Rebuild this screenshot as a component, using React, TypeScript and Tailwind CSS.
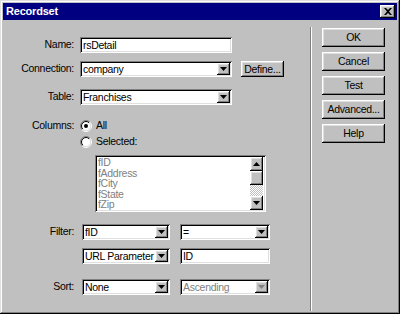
import React from 'react';

const raised =
  'shadow-[inset_-1px_-1px_#000,inset_1px_1px_#fff,inset_-2px_-2px_#808080,inset_2px_2px_#dfdfdf]';
const sunken =
  'shadow-[inset_1px_1px_#808080,inset_-1px_-1px_#fff,inset_2px_2px_#000,inset_-2px_-2px_#dfdfdf]';

function Arrow({ up = false, grey = false }: { up?: boolean; grey?: boolean }) {
  return (
    <svg width="7" height="4" viewBox="0 0 7 4" className={up ? 'rotate-180' : ''}>
      <path d="M0 0h7L3.5 4z" fill={grey ? '#808080' : '#000'} />
    </svg>
  );
}

function ArrowBtn({ up = false, grey = false, h = 'h-full' }: { up?: boolean; grey?: boolean; h?: string }) {
  return (
    <div className={`flex w-[13px] ${h} shrink-0 items-center justify-center bg-[#c0c0c0] ${raised}`}>
      <Arrow up={up} grey={grey} />
    </div>
  );
}

function Select({ value, w, disabled = false }: { value: string; w: string; disabled?: boolean }) {
  return (
    <div className={`flex h-[16px] ${w} bg-white p-[2px] ${sunken}`}>
      <span className={`flex-1 overflow-hidden whitespace-nowrap pl-[1px] leading-[12px] ${disabled ? 'text-[#808080]' : 'text-black'}`}>
        {value}
      </span>
      <ArrowBtn grey={disabled} />
    </div>
  );
}

function TextBox({ value, w }: { value: string; w: string }) {
  return (
    <div className={`flex h-[16px] ${w} items-center bg-white px-[3px] ${sunken}`}>
      <span className="leading-[12px]">{value}</span>
    </div>
  );
}

function Radio({ checked, id }: { checked?: boolean; id: string }) {
  return (
    <svg width="12" height="12" viewBox="0 0 12 12" className="shrink-0">
      <defs>
        <linearGradient id={`o${id}`} x1="0" y1="0" x2="1" y2="1">
          <stop offset="0.5" stopColor="#808080" />
          <stop offset="0.5" stopColor="#ffffff" />
        </linearGradient>
        <linearGradient id={`i${id}`} x1="0" y1="0" x2="1" y2="1">
          <stop offset="0.5" stopColor="#000000" />
          <stop offset="0.5" stopColor="#dfdfdf" />
        </linearGradient>
      </defs>
      <circle cx="6" cy="6" r="5.5" fill="none" stroke={`url(#o${id})`} strokeWidth="1" />
      <circle cx="6" cy="6" r="4.5" fill="#fff" stroke={`url(#i${id})`} strokeWidth="1" />
      {checked && <circle cx="6" cy="6" r="2" fill="#000" />}
    </svg>
  );
}

function Button({ children, w = 'w-[63px]', h = 'h-[19px]' }: { children: React.ReactNode; w?: string; h?: string }) {
  return (
    <div className={`flex ${w} ${h} items-center justify-center bg-[#c0c0c0] ${raised}`}>
      <span className="leading-none">{children}</span>
    </div>
  );
}

function Label({ children }: { children: React.ReactNode }) {
  return <div className="w-[72px] shrink-0 pr-[1px] text-right">{children}</div>;
}

export default function App() {
  const columns = ['fID', 'fAddress', 'fCity', 'fState', 'fZip'];

  return (
    <div
      className="h-[314px] w-[400px] bg-[#c0c0c0] p-[3px] text-[10.5px] tracking-[-0.3px] text-black shadow-[inset_-1px_-1px_#000,inset_1px_1px_#dfdfdf,inset_-2px_-2px_#808080,inset_2px_2px_#fff]"
      style={{ fontFamily: '"Liberation Sans", Arial, sans-serif' }}
    >
      {/* title bar */}
      <div className="flex h-[17px] items-center justify-between bg-[#000080] pl-[3px] pr-[2px]">
        <span className="text-[11px] font-bold tracking-[-0.2px] text-white">Recordset</span>
        <div className={`flex h-[13px] w-[15px] items-center justify-center bg-[#c0c0c0] ${raised}`}>
          <svg width="8" height="7" viewBox="0 0 8 7">
            <path d="M0 0h2l2 2 2-2h2L5 3.5 8 7H6L4 5 2 7H0l3-3.5z" fill="#000" />
          </svg>
        </div>
      </div>

      <div className="flex">
        {/* form */}
        <div className="flex w-[307px] flex-col">
          <div className="mt-[17px] flex h-[16px] items-center gap-[5px]">
            <Label>Name:</Label>
            <TextBox value="rsDetail" w="w-[152px]" />
          </div>

          <div className="mt-[8px] flex h-[16px] items-center gap-[5px]">
            <Label>Connection:</Label>
            <Select value="company" w="w-[152px]" />
            <div className="ml-[4px]">
              <Button w="w-[43px]" h="h-[16px]">Define...</Button>
            </div>
          </div>

          <div className="mt-[12px] flex h-[16px] items-center gap-[5px]">
            <Label>Table:</Label>
            <Select value="Franchises" w="w-[152px]" />
          </div>

          <div className="mt-[14px] flex h-[14px] items-center gap-[5px]">
            <Label>Columns:</Label>
            <Radio checked id="all" />
            <span className="ml-[-1px]">All</span>
          </div>
          <div className="mt-[2px] flex h-[14px] items-center gap-[5px]">
            <div className="w-[72px] shrink-0" />
            <Radio id="sel" />
            <span className="ml-[-1px]">Selected:</span>
          </div>

          <div className="ml-[92px] mt-[6px] flex h-[57px] w-[171px] bg-white p-[2px] shadow-[inset_1px_1px_#808080,inset_-1px_-1px_#fff,inset_2px_2px_#000,inset_-2px_-2px_#dfdfdf]">
            <div className="flex-1 pl-[1px]">
              {columns.map((c) => (
                <div key={c} className="h-[10.6px] leading-[11px] text-[#808080]">
                  {c}
                </div>
              ))}
            </div>
            <div className="flex w-[14px] flex-col">
              <ArrowBtn up h="h-[14px]" />
              <div className={`h-[14px] w-[13px] bg-[#c0c0c0] ${raised}`} />
              <div className="w-[13px] flex-1 bg-[repeating-conic-gradient(#fff_0_25%,#c0c0c0_0_50%)] bg-[length:2px_2px]" />
              <ArrowBtn h="h-[14px]" />
            </div>
          </div>

          <div className="mt-[12px] flex h-[16px] items-center gap-[7px]">
            <Label>Filter:</Label>
            <Select value="fID" w="w-[88px]" />
            <div className="ml-[3px]">
              <Select value="=" w="w-[90px]" />
            </div>
          </div>

          <div className="mt-[8px] flex h-[16px] items-center gap-[7px]">
            <div className="w-[72px] shrink-0" />
            <Select value="URL Parameter" w="w-[88px]" />
            <div className="ml-[3px]">
              <TextBox value="ID" w="w-[90px]" />
            </div>
          </div>

          <div className="mt-[15px] flex h-[16px] items-center gap-[7px]">
            <Label>Sort:</Label>
            <Select value="None" w="w-[88px]" />
            <div className="ml-[3px]">
              <Select value="Ascending" w="w-[90px]" disabled />
            </div>
          </div>
        </div>

        {/* separator */}
        <div className="mb-[2px] mt-[7px] h-[284px] w-[2px] border-l border-r border-l-[#808080] border-r-white" />

        {/* buttons */}
        <div className="ml-[10px] mt-[8px] flex flex-col gap-[5px]">
          <Button>OK</Button>
          <Button>Cancel</Button>
          <Button>Test</Button>
          <Button>Advanced...</Button>
          <Button>Help</Button>
        </div>
      </div>
    </div>
  );
}
